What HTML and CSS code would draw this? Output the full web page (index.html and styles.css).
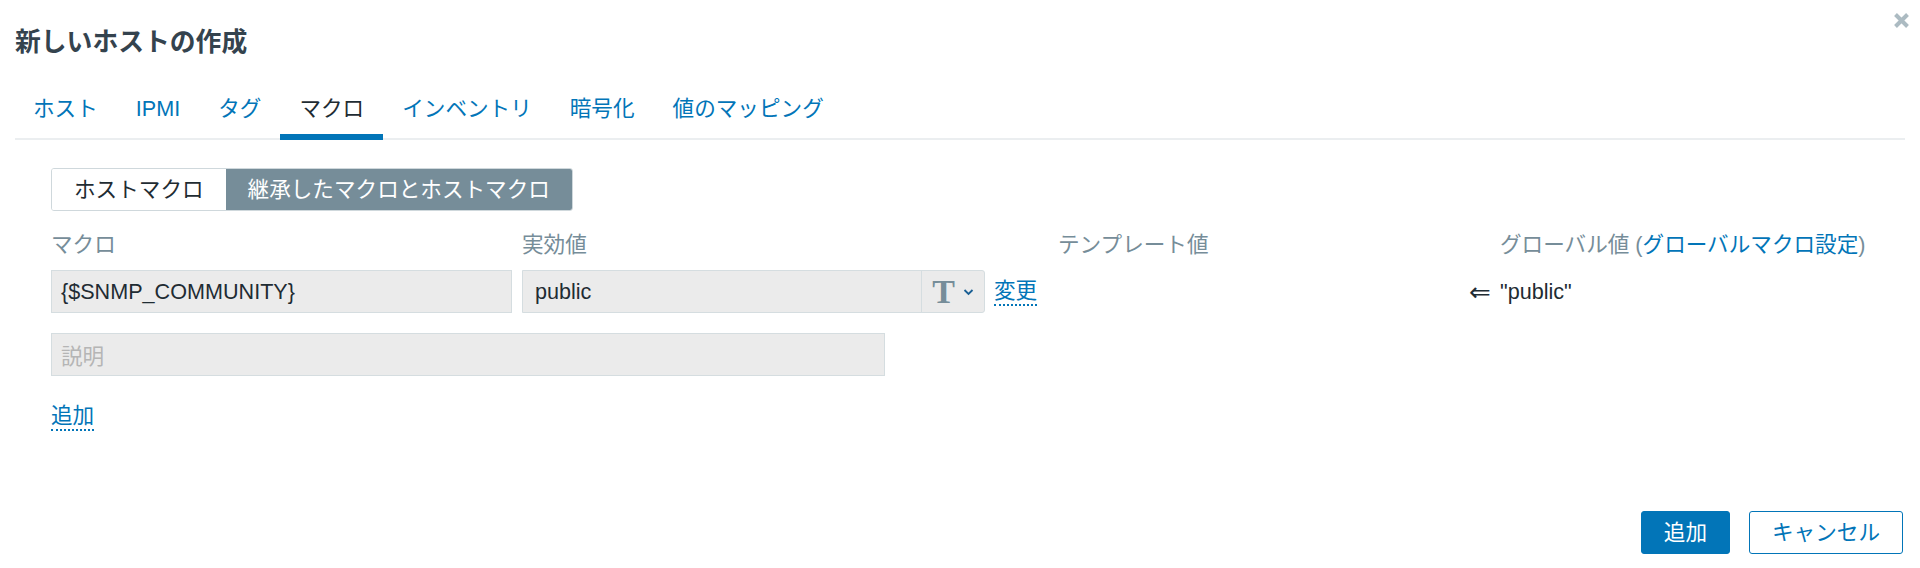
FILE: index.html
```html
<!DOCTYPE html>
<html lang="ja">
<head>
<meta charset="utf-8">
<title>新しいホストの作成</title>
<link rel="stylesheet" href="styles.css">
</head>
<body>
<div class="dialog">
  <div class="header">
    <h4 class="title">新しいホストの作成</h4>
    <span class="close" aria-label="close">
      <svg width="17" height="17" viewBox="0 0 17 17"><path d="M2.5 2.5 L14.5 14.5 M14.5 2.5 L2.5 14.5" stroke="#acbbc2" stroke-width="4" stroke-linecap="butt"/></svg>
    </span>
  </div>
  <ul class="tabs">
    <li class="tab">ホスト</li>
    <li class="tab">IPMI</li>
    <li class="tab">タグ</li>
    <li class="tab active">マクロ</li>
    <li class="tab">インベントリ</li>
    <li class="tab">暗号化</li>
    <li class="tab">値のマッピング</li>
  </ul>
  <div class="content">
    <div class="toggle">
      <span class="opt">ホストマクロ</span>
      <span class="opt selected">継承したマクロとホストマクロ</span>
    </div>
    <div class="grid">
      <div class="th">マクロ</div>
      <div class="th">実効値</div>
      <div class="th"></div>
      <div class="th">テンプレート値</div>
      <div class="th"></div>
      <div class="th">グローバル値 (<span class="link-plain">グローバルマクロ設定</span>)</div>

      <div class="field macro">{$SNMP_COMMUNITY}</div>
      <div class="field value">
        <span class="val">public</span>
        <span class="type-btn">
          <span class="t-glyph">T</span>
          <svg width="11" height="8" viewBox="0 0 11 8"><path d="M1.5 2 L5.5 6 L9.5 2" fill="none" stroke="#1a5f94" stroke-width="1.8"/></svg>
        </span>
      </div>
      <div class="cell change"><span class="link">変更</span></div>
      <div class="cell"></div>
      <div class="cell arrow">⇐</div>
      <div class="cell">"public"</div>
    </div>
    <div class="field desc">説明</div>
    <div class="add-row"><span class="link">追加</span></div>
  </div>
  <div class="footer">
    <button class="btn primary">追加</button>
    <button class="btn alt">キャンセル</button>
  </div>
</div>
</body>
</html>
```
FILE: styles.css
```css
html, body {
  margin: 0;
  padding: 0;
  background: #ffffff;
}
body {
  font-family: "Liberation Sans", "Noto Sans CJK JP", sans-serif;
  font-size: 21.6px;
  color: #1f2c33;
}
.dialog {
  position: relative;
  height: 568px;
  box-sizing: border-box;
  padding: 0 15px 14px 15px;
  display: flex;
  flex-direction: column;
}
.header {
  height: 80px;
  display: flex;
  align-items: center;
}
.title {
  margin: 3px 0 0 0;
  font-size: 25.8px;
  line-height: 30px;
  font-weight: bold;
  color: #34434e;
}
.close {
  position: absolute;
  top: 12px;
  right: 10px;
  width: 17px;
  height: 17px;
  display: block;
}
.close svg { display: block; }
.tabs {
  list-style: none;
  margin: 0;
  padding: 0;
  display: flex;
  border-bottom: 2px solid #ebeef0;
}
.tab {
  padding: 16px 19px 12px 19px;
  line-height: 26px;
  border-bottom: 6px solid transparent;
  margin-bottom: -2px;
  color: #0275b8;
}
.tab:first-child { padding-left: 18px; }
.tab.active {
  color: #1f2c33;
  border-bottom-color: #0275b8;
}
.content {
  padding: 28px 36px 0 36px;
  display: flex;
  flex-direction: column;
  align-items: flex-start;
}
.toggle {
  display: inline-flex;
  border: 1px solid #cfd8dc;
  border-radius: 3px;
  overflow: hidden;
}
.opt {
  padding: 7px 22px;
  line-height: 27px;
  color: #1f2c33;
  background: #ffffff;
}
.opt.selected {
  background: #768d99;
  color: #ffffff;
}
.grid {
  margin-top: 21px;
  display: grid;
  grid-template-columns: 471px 463px 73px 411px 31px auto;
  row-gap: 12px;
  align-items: center;
}
.th {
  line-height: 26px;
  color: #768d99;
  white-space: nowrap;
}
.link-plain { color: #0275b8; }
.field {
  height: 43px;
  box-sizing: border-box;
  border: 1px solid #d5dde0;
  background: #ebebeb;
  display: flex;
  align-items: center;
  white-space: nowrap;
}
.macro {
  width: 461px;
  padding: 0 9px;
}
.value {
  width: 463px;
  border-radius: 0 3px 3px 0;
}
.val {
  flex: 1;
  padding: 0 12px;
}
.type-btn {
  width: 62px;
  height: 100%;
  border-left: 1px solid #d5dde0;
  display: flex;
  align-items: center;
  justify-content: center;
  gap: 8px;
}
.t-glyph {
  font-family: "Liberation Serif", "DejaVu Serif", serif;
  font-weight: bold;
  font-size: 34px;
  line-height: 1;
  color: #768d99;
  margin-top: 1px;
}
.type-btn svg { display: block; margin-top: 1px; }
.cell { white-space: nowrap; line-height: 26px; }
.change { padding-left: 9px; }
.arrow {
  font-family: "DejaVu Sans", sans-serif;
  font-size: 26px;
  line-height: 26px;
  padding-left: 0;
}
.link {
  color: #0275b8;
  border-bottom: 2px dotted #0275b8;
  display: inline-block;
  line-height: 26px;
}
.desc {
  margin-top: 20px;
  width: 834px;
  padding: 0 9px;
  color: #b5b5b5;
}
.add-row {
  margin-top: 27px;
}
.footer {
  margin-top: auto;
  display: flex;
  justify-content: flex-end;
  gap: 19px;
  padding-right: 2px;
}
.btn {
  font-family: "Liberation Sans", "Noto Sans CJK JP", sans-serif;
  font-size: 21.6px;
  line-height: 27px;
  padding: 7px 22px;
  border-radius: 3px;
  border: 1px solid #0275b8;
  margin: 0;
}
.btn.primary {
  background: #0275b8;
  color: #ffffff;
}
.btn.alt {
  background: #ffffff;
  color: #0275b8;
}
```
